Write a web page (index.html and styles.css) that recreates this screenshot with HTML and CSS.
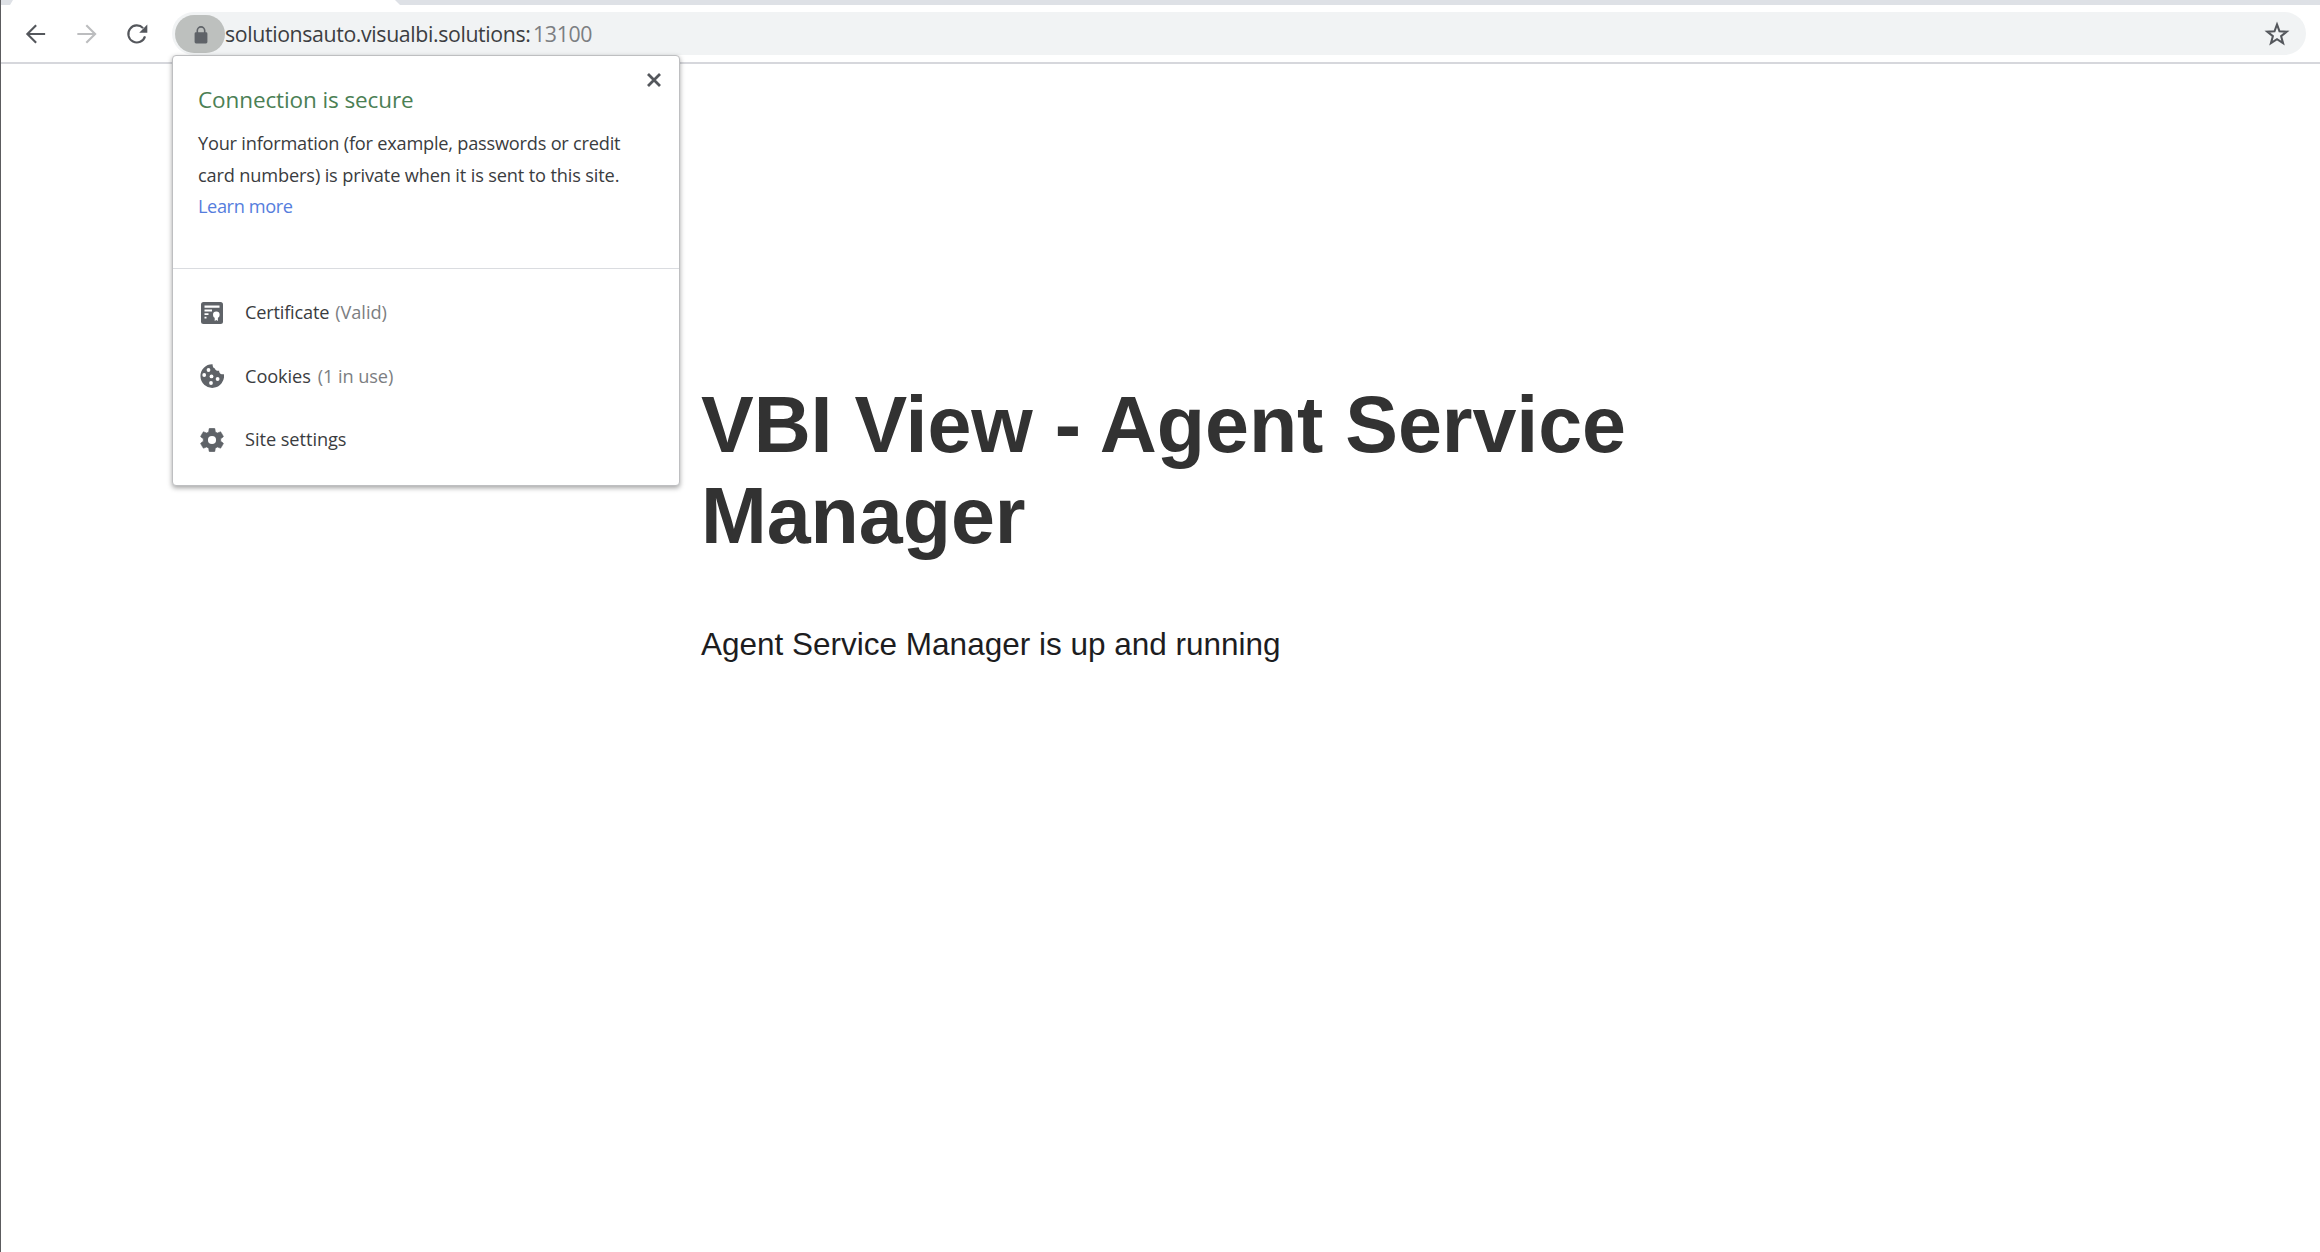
FILE: index.html
```
<!DOCTYPE html>
<html lang="en">
<head>
<meta charset="utf-8">
<title>VBI View - Agent Service Manager</title>
<link rel="stylesheet" href="styles.css">
</head>
<body>
<div class="window">
  <div class="tabstrip"><div class="tab"></div></div>
  <header class="toolbar">
    <nav class="nav">
      <svg class="nav-icon" viewBox="0 0 24 24"><path d="M22.500 12H3.500M12.700 2.400L3.100 12l9.600 9.600"/></svg>
      <svg class="nav-icon nav-icon-off" viewBox="0 0 24 24"><path d="M2 12h19M11.800 2.400l9.600 9.600-9.600 9.600"/></svg>
      <svg class="nav-icon" viewBox="0 0 24 24"><path d="M20.200 14.600A9.300 9.300 0 1 1 18.100 5.600"/><path class="solid" d="M22.700 1.600V10.600H13.900Z"/></svg>
    </nav>
    <div class="omnibox">
      <div class="site-chip">
        <svg class="lock" viewBox="0 0 14 18"><path d="M3.300 7V4.600a3.700 3.700 0 0 1 7.400 0V7" fill="none" stroke="#5f6368" stroke-width="1.600"/><rect x=".600" y="6.300" width="12.800" height="11.200" rx="1.400" fill="#5f6368"/></svg>
      </div>
      <span class="host">solutionsauto.visualbi.solutions:</span><span class="port">13100</span>
      <svg class="star" viewBox="0 0 24 24"><path d="M12 3.200l2.300 6.300 6.700.300-5.200 4.200 1.800 6.500-5.600-3.700-5.600 3.700 1.800-6.500L3 9.800l6.700-.300z"/></svg>
    </div>
  </header>
  <main class="page">
    <h1 class="heading">VBI View - Agent Service Manager</h1>
    <p class="status">Agent Service Manager is up and running</p>
  </main>
</div>
<section class="popup">
  <div class="popup-head">
    <h2 class="popup-title">Connection is secure</h2>
    <p class="popup-text"><span class="line-a">Your information (for example, passwords or credit</span><br><span class="line-b">card numbers) is private when it is sent to this site.</span><br><a class="learn">Learn more</a></p>
    <svg class="close" viewBox="0 0 16 16"><path d="M2 2l12 12M14 2L2 14"/></svg>
  </div>
  <ul class="rows">
    <li class="row">
      <svg class="row-icon" viewBox="0 0 24 24"><rect x="1" y="1" width="22" height="22" rx="2.500" fill="#5f6368"/><g fill="#fff"><path d="M4.500 4.600h15v2.200h-15zM4.500 8.600h7.500v1.800H4.500zM4.500 12.200h4v1.700h-4zM4.500 15.700h2v1.800h-2z"/><circle cx="16.300" cy="13.800" r="3.300"/><path d="M14.700 16h3.200v4l-1.600-1-1.600 1z"/></g></svg>
      <span class="label label-cert">Certificate</span><span class="detail detail-cert">(Valid)</span>
    </li>
    <li class="row">
      <svg class="row-icon" viewBox="0 0 24 24"><path fill="#5f6368" d="M12.600.300A11.800 11.800 0 1 0 23.900 10.200c-1.700.500-3.500-.100-4.300-1.500-.500-.900-.500-1.300-.400-2-2.300.400-3.900-.700-4.300-2.300-1.600-.500-2.400-2-2.300-4.100z"/><g fill="#fff"><circle cx="8.500" cy="6" r="1.900"/><circle cx="4.200" cy="11" r="1.900"/><circle cx="11.500" cy="12.400" r="1.900"/><circle cx="17.600" cy="15" r="1.900"/><circle cx="11" cy="19" r="1.900"/></g></svg>
      <span class="label label-cookies">Cookies</span><span class="detail detail-cookies">(1 in use)</span>
    </li>
    <li class="row">
      <svg class="row-icon" viewBox="1.700 1.700 20.600 20.600"><path fill="#5f6368" stroke="#5f6368" stroke-width=".500" d="M19.430 12.980c.040-.320.070-.640.070-.980s-.030-.660-.070-.980l2.110-1.650c.190-.150.240-.420.120-.640l-2-3.460c-.120-.220-.390-.300-.610-.220l-2.490 1c-.520-.400-1.080-.730-1.690-.980l-.380-2.650A.488.488 0 0 0 14 2h-4c-.250 0-.460.180-.490.420l-.380 2.650c-.610.250-1.170.590-1.690.980l-2.490-1c-.230-.090-.490 0-.610.220l-2 3.460c-.130.220-.070.490.120.640l2.110 1.650c-.040.320-.070.650-.070.980s.030.660.070.980l-2.110 1.650c-.190.150-.240.420-.120.640l2 3.460c.120.220.390.300.610.220l2.490-1c.520.400 1.080.730 1.690.980l.380 2.650c.030.240.240.420.490.420h4c.250 0 .460-.180.490-.420l.380-2.650c.610-.250 1.170-.590 1.690-.980l2.490 1c.230.090.490 0 .610-.220l2-3.460c.120-.220.070-.490-.120-.640z"/><circle cx="12" cy="12" r="3.500" fill="#fff"/></svg>
      <span class="label label-settings">Site settings</span>
    </li>
  </ul>
</section>
</body>
</html>
```
FILE: styles.css
```
* { box-sizing: border-box; margin: 0; padding: 0; }
body { background: #fff; overflow: hidden; }
svg { display: block; flex: none; }

.window {
  height: 1252px;
  border-left: 1px solid #5c5c5f;
  font-family: "Liberation Sans", sans-serif;
}
.tabstrip { height: 5px; background: #dee1e6; padding-left: 9px; }
.tab {
  width: 390px;
  height: 5px;
  background: #fff;
  clip-path: polygon(3px 0, 385px 0, 390px 5px, 0 5px);
}

.toolbar {
  display: flex;
  height: 59px;
  padding: 7px 14px 0 22px;
  border-bottom: 2px solid #d6d7dc;
}
.nav { display: flex; gap: 26px; height: 43px; align-items: center; }
.nav-icon {
  width: 25px;
  height: 22px;
  fill: none;
  stroke: #54575c;
  stroke-width: 2.3;
}
.nav-icon-off { stroke: #bcbdbf; }
.nav-icon .solid { fill: #54575c; stroke: none; }

.omnibox {
  display: flex;
  flex: 1;
  align-items: center;
  height: 43px;
  margin-left: 22px;
  padding: 0 16px 0 3px;
  border-radius: 22px;
  background: #f1f3f4;
  font: 21.3px/30px "Open Sans", sans-serif;
  white-space: nowrap;
}
.site-chip {
  display: flex;
  justify-content: center;
  width: 50px;
  height: 38px;
  padding: 11px 0 0 1px;
  border-radius: 19px;
  background: #bdc0be;
}
.lock { width: 14px; height: 18px; }
.host { width: 308px; color: #3c3e42; letter-spacing: -0.37px; }
.port { color: #7c7e82; letter-spacing: -0.35px; }
.star {
  width: 26px;
  height: 26px;
  margin-left: auto;
  fill: none;
  stroke: #54575c;
  stroke-width: 1.9;
}

.page { width: 1624px; padding: 315px 0 0 700px; }
.heading {
  width: 928px;
  color: #323232;
  font-size: 79px;
  line-height: 91px;
  letter-spacing: -0.06px;
}
.status {
  margin-top: 65px;
  color: #1d1d1f;
  font-size: 31.5px;
  line-height: 36px;
}

.popup {
  position: absolute;
  left: 172px;
  top: 55px;
  width: 508px;
  height: 431px;
  border: 1px solid #bebfc1;
  border-radius: 4px;
  background: #fff;
  box-shadow: 0 2px 5px rgba(0, 0, 0, .36);
  color: #3a3c40;
  font: 18.2px/31.6px "Open Sans", sans-serif;
  white-space: nowrap;
}
.popup-head {
  position: relative;
  height: 213px;
  padding: 29px 0 0 25px;
  border-bottom: 1px solid #dadce0;
}
.popup-title {
  color: #4b8054;
  font-size: 22.5px;
  font-weight: 400;
  line-height: 30px;
  letter-spacing: -0.1px;
}
.popup-text { margin-top: 13px; }
.line-a { letter-spacing: -0.22px; }
.line-b { letter-spacing: -0.15px; }
.learn { color: #557ddd; letter-spacing: -0.4px; }
.close {
  position: absolute;
  left: 473px;
  top: 16px;
  width: 16px;
  height: 16px;
  stroke: #54575c;
  stroke-width: 2.8;
}

.rows { padding-top: 12.5px; list-style: none; }
.row {
  display: flex;
  align-items: center;
  height: 63.3px;
  padding-left: 27px;
}
.row-icon { width: 24px; height: 24px; margin-right: 21px; }
.detail { margin-left: 6px; color: #7c7e82; }
.label-cert { letter-spacing: -0.2px; }
.detail-cert { letter-spacing: -0.05px; }
.label-cookies { letter-spacing: -0.08px; }
.detail-cookies { margin-left: 7px; letter-spacing: -0.1px; }
.label-settings { letter-spacing: -0.05px; }
```
